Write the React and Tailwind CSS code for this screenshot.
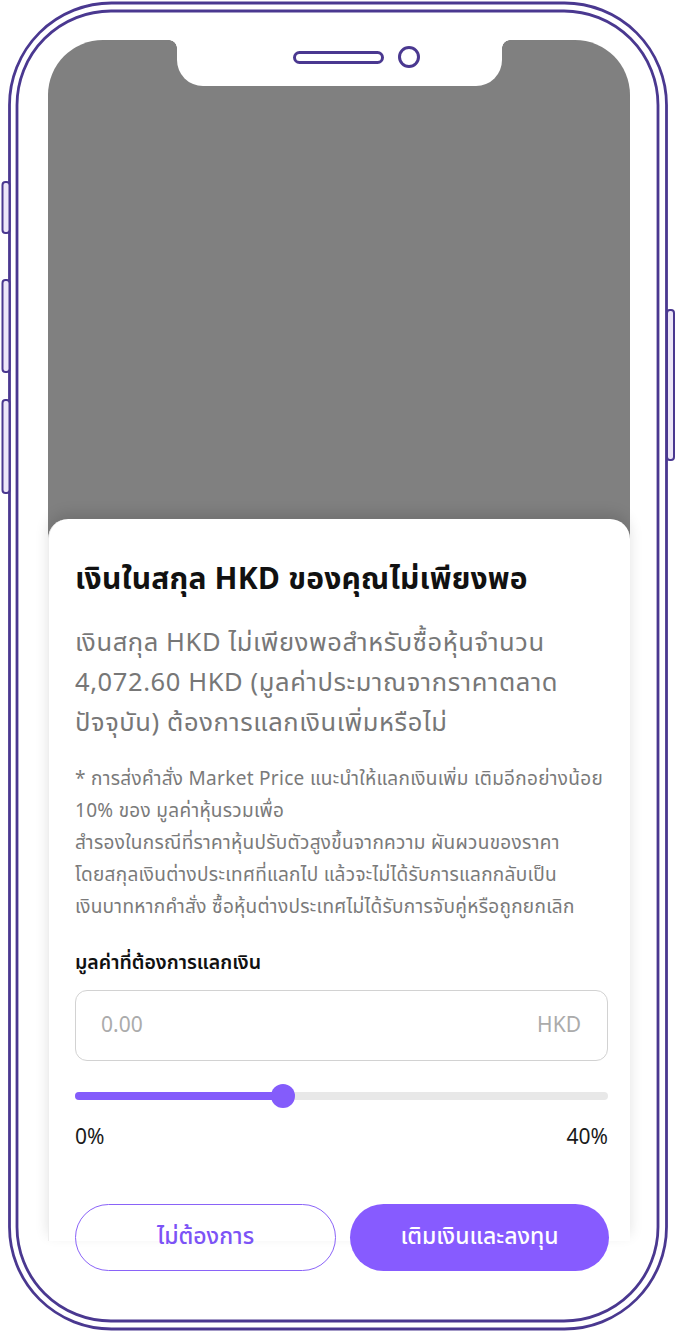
import React from "react";

const purple = "#4a3890";

function PhoneFrame() {
    // outline of the device, drawn over everything
    return (
        <svg className="absolute inset-0 pointer-events-none" width="677" height="1334" viewBox="0 0 677 1334" fill="none">
            <rect x="9.5" y="3" width="657" height="1326" rx="102" stroke={purple} strokeWidth="2.8" />
            <rect x="17" y="11" width="641" height="1310" rx="94" stroke={purple} strokeWidth="2.8" />
            {/* side buttons */}
            <rect x="2.5" y="182" width="7" height="51" rx="3" fill="#ece6f8" stroke={purple} strokeWidth="2" />
            <rect x="2.5" y="280" width="7" height="92" rx="3" fill="#ece6f8" stroke={purple} strokeWidth="2" />
            <rect x="2.5" y="400" width="7" height="93" rx="3" fill="#ece6f8" stroke={purple} strokeWidth="2" />
            <rect x="667" y="310" width="7" height="150" rx="3" fill="#ece6f8" stroke={purple} strokeWidth="2" />
        </svg>
    );
}

function Notch() {
    return (
        <div className="flex justify-center items-start">
            <div className="w-[8px] h-[8px] bg-[radial-gradient(circle_at_0_100%,#808080_7.5px,#ffffff_8px)]"></div>
            <div className="w-[325px] h-[46px] bg-white rounded-b-[26px] flex items-start pt-[11px] pl-[116px] gap-[14px]">
                <div className="w-[91px] h-[13px] rounded-full border-[3px] border-[#4a3890]"></div>
                <div className="w-[22px] h-[22px] -mt-[5px] rounded-full border-[3px] border-[#4a3890]"></div>
            </div>
            <div className="w-[8px] h-[8px] bg-[radial-gradient(circle_at_100%_100%,#808080_7.5px,#ffffff_8px)]"></div>
        </div>
    );
}

export default function App() {
    const font = { fontFamily: '"Noto Sans Thai", "Noto Sans", "Liberation Sans", sans-serif' };

    return (
        <div className="relative w-[677px] h-[1334px] bg-white overflow-hidden" style={font}>
            <div className="pt-[40px] pl-[48px]">
                <div className="w-[582px] bg-[#808080] rounded-t-[55px] flex flex-col">
                    {/* Notch */}
                    <Notch />

                    {/* dimmed app area */}
                    <div className="h-[433px]"></div>

                    {/* Bottom sheet */}
                    <div className="h-[722px] bg-white rounded-t-[20px] border-l border-[#eeeeee] shadow-[0_-6px_14px_rgba(0,0,0,0.12)] pl-[26px] pr-[23px] pt-[43px]">
                        <h1 className="text-[30px] leading-[36px] font-bold tracking-[0.2px] text-[#111] whitespace-nowrap">
                            เงินในสกุล HKD ของคุณไม่เพียงพอ
                        </h1>

                        <div className="mt-[25px] text-[25.5px] leading-[40px] tracking-[0.6px] text-[#777] whitespace-nowrap">
                            <p>เงินสกุล HKD ไม่เพียงพอสำหรับซื้อหุ้นจำนวน</p>
                            <p>4,072.60 HKD (มูลค่าประมาณจากราคาตลาด</p>
                            <p>ปัจจุบัน) ต้องการแลกเงินเพิ่มหรือไม่</p>
                        </div>

                        <div className="mt-[21px] text-[19px] leading-[32px] tracking-[0.3px] text-[#7a7a7a] whitespace-nowrap">
                            <p>* การส่งคำสั่ง Market Price แนะนำให้แลกเงินเพิ่ม เติมอีกอย่างน้อย</p>
                            <p>10% ของ มูลค่าหุ้นรวมเพื่อ</p>
                            <p>สำรองในกรณีที่ราคาหุ้นปรับตัวสูงขึ้นจากความ ผันผวนของราคา</p>
                            <p>โดยสกุลเงินต่างประเทศที่แลกไป แล้วจะไม่ได้รับการแลกกลับเป็น</p>
                            <p>เงินบาทหากคำสั่ง ซื้อหุ้นต่างประเทศไม่ได้รับการจับคู่หรือถูกยกเลิก</p>
                        </div>

                        <p className="mt-[27px] text-[19.5px] leading-[24px] font-semibold text-[#111]">
                            มูลค่าที่ต้องการแลกเงิน
                        </p>

                        {/* Amount input */}
                        <div className="mt-[15px] w-[533px] h-[71px] rounded-[12px] border border-[#d2d2d2] flex items-center justify-between pl-[25px] pr-[26px] text-[21px] text-[#ababab]">
                            <span>0.00</span>
                            <span>HKD</span>
                        </div>

                        {/* Slider */}
                        <div className="mt-[23px] w-[533px] h-[24px] flex items-center">
                            <div className="relative w-full h-[8px] rounded-full bg-[#e8e8e8]">
                                <div className="h-full w-[208px] rounded-full bg-[#845cfb]"></div>
                                <div className="absolute left-[196px] -top-[8px] w-[24px] h-[24px] rounded-full bg-[#845cfb]"></div>
                            </div>
                        </div>
                        <div className="mt-[18px] w-[533px] flex justify-between text-[21px] leading-[24px] text-[#1a1a1a]">
                            <span>0%</span>
                            <span>40%</span>
                        </div>

                        {/* Actions */}
                        <div className="mt-[54px] w-[534px] flex gap-[14px]">
                            <button className="flex-1 h-[67px] rounded-full border-[1.5px] border-[#8a63f8] text-[#7c53f6] text-[23px] font-medium">
                                ไม่ต้องการ
                            </button>
                            <button className="flex-1 h-[67px] rounded-full bg-[#875bff] text-white text-[23px] font-medium">
                                เติมเงินและลงทุน
                            </button>
                        </div>
                    </div>
                </div>
            </div>

            <PhoneFrame />
        </div>
    );
}
